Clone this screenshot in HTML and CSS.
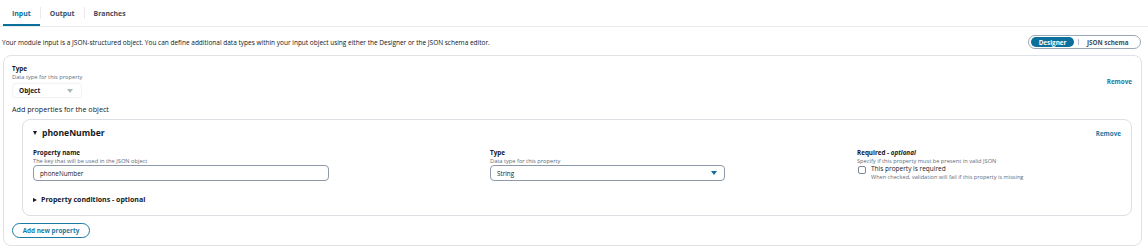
FILE: index.html
```html
<!DOCTYPE html>
<html lang="en">
<head>
    <meta charset="UTF-8">
    <title>Module input</title>
    <link rel="stylesheet" href="styles.css">
</head>
<body>
    <div class="tabs">
        <div class="tab active">Input</div>
        <div class="tab-sep"></div>
        <div class="tab">Output</div>
        <div class="tab-sep"></div>
        <div class="tab">Branches</div>
    </div>

    <div class="intro">
        <p class="intro-text">Your module input is a JSON-structured object. You can define additional data types within your input object using either the Designer or the JSON schema editor.</p>
        <div class="segmented">
            <button class="seg active">Designer</button>
            <span class="seg-sep"></span>
            <button class="seg">JSON schema</button>
        </div>
    </div>

    <div class="panel">
        <div class="panel-head">
            <div class="field">
                <div class="label">Type</div>
                <div class="hint">Data type for this property</div>
                <div class="select select-plain">
                    <span>Object</span>
                    <span class="caret grey"></span>
                </div>
            </div>
            <a class="link">Remove</a>
        </div>

        <div class="sub-title">Add properties for the object</div>

        <div class="prop">
            <div class="prop-head">
                <div class="prop-name"><span class="arrow-down"></span>phoneNumber</div>
                <a class="link">Remove</a>
            </div>
            <div class="prop-grid">
                <div class="field">
                    <div class="label">Property name</div>
                    <div class="hint">The key that will be used in the JSON object</div>
                    <div class="input name-input">phoneNumber</div>
                </div>
                <div class="field">
                    <div class="label">Type</div>
                    <div class="hint">Data type for this property</div>
                    <div class="input type-input">
                        <span>String</span>
                        <span class="caret"></span>
                    </div>
                </div>
                <div class="field">
                    <div class="label">Required - <i>optional</i></div>
                    <div class="hint">Specify if this property must be present in valid JSON</div>
                    <label class="check">
                        <span class="box"></span>
                        <span>
                            <span class="check-label">This property is required</span>
                            <span class="check-hint">When checked, validation will fail if this property is missing</span>
                        </span>
                    </label>
                </div>
            </div>
            <div class="conditions"><span class="arrow-right"></span>Property conditions - optional</div>
        </div>

        <button class="add-btn">Add new property</button>
    </div>
</body>
</html>
```

FILE: styles.css
```css
body {
    margin: 0;
    font-family: "Open Sans", "Noto Sans", sans-serif;
    color: #16191f;
    background: #ffffff;
}

.tabs {
    display: flex;
    align-items: center;
    height: 26px;
    padding-left: 3px;
    border-bottom: 1px solid #e9ebed;
}

.tab {
    height: 26px;
    box-sizing: border-box;
    padding: 9px 9px 0;
    font-size: 6.9px;
    font-weight: 700;
    color: #414d5c;
}

.tab.active {
    color: #0a6f9a;
    border-bottom: 2px solid #0a6f9a;
}

.tab-sep {
    width: 1px;
    height: 12px;
    background: #e9ebed;
}

.intro {
    display: flex;
    align-items: center;
    justify-content: space-between;
    padding: 8px 7px 0 2px;
}

.intro-text {
    margin: 0;
    font-size: 6.5px;
    color: #0f141a;
}

.segmented {
    display: flex;
    align-items: center;
    width: 113px;
    height: 14px;
    box-sizing: border-box;
    padding: 1px 2px;
    border: 1px solid #9ba7b6;
    border-radius: 8px;
}

.seg {
    border: 0;
    background: none;
    font-family: inherit;
    font-size: 6.3px;
    font-weight: 700;
    color: #414d5c;
    padding: 0 8px;
    height: 10px;
    border-radius: 6px;
}

.seg.active {
    background: #0a6f9a;
    color: #ffffff;
    width: 43px;
    padding: 0;
}

.seg-sep {
    width: 1px;
    height: 6px;
    margin-left: 4px;
    background: #b6bec9;
}

.panel {
    margin: 6px 6px 0 3px;
    padding: 9px 9px 9px 8px;
    border: 1px solid #e0e2e5;
    border-radius: 8px;
    height: 171px;
}

.panel-head {
    display: flex;
    align-items: center;
    justify-content: space-between;
}

.label {
    font-size: 6.3px;
    font-weight: 700;
    line-height: 8px;
}

.label i {
    font-weight: 700;
}

.hint {
    font-size: 5.7px;
    color: #5f6b7a;
    line-height: 8px;
}

.link {
    font-size: 6.3px;
    font-weight: 700;
    color: #1a7aa3;
}

.select {
    display: flex;
    align-items: center;
    justify-content: space-between;
    box-sizing: border-box;
    margin-top: 2px;
    height: 15px;
    font-size: 6.5px;
    font-weight: 700;
}

.select-plain {
    width: 70px;
    padding: 0 8px 0 6px;
    border: 1px solid #f2f3f3;
    border-radius: 4px;
    box-shadow: 0 0 1px rgba(0, 0, 0, 0.08);
}

.caret {
    width: 0;
    height: 0;
    border-left: 3px solid transparent;
    border-right: 3px solid transparent;
    border-top: 4px solid #0a6f9a;
}

.caret.grey {
    border-top-color: #aab7b8;
}

.sub-title {
    margin-top: 6px;
    font-size: 7.2px;
    color: #16191f;
}

.prop {
    margin: 5px 0 0 10px;
    padding: 7px 10px 8px 10px;
    border: 1px solid #dcdfe3;
    border-radius: 8px;
    height: 80px;
}

.prop-head {
    display: flex;
    align-items: center;
    justify-content: space-between;
}

.prop-name {
    display: flex;
    align-items: center;
    font-size: 8.6px;
    font-weight: 700;
}

.arrow-down {
    width: 0;
    height: 0;
    margin-right: 5px;
    border-left: 2.5px solid transparent;
    border-right: 2.5px solid transparent;
    border-top: 4px solid #16191f;
}

.arrow-right {
    width: 0;
    height: 0;
    margin-right: 4px;
    border-top: 2.5px solid transparent;
    border-bottom: 2.5px solid transparent;
    border-left: 4px solid #16191f;
}

.prop-grid {
    display: grid;
    grid-template-columns: 457px 367px 1fr;
    margin-top: 10px;
}

.input {
    box-sizing: border-box;
    height: 16px;
    margin-top: 0;
    padding: 0 6px;
    border: 1px solid #8d99a8;
    border-radius: 4px;
    font-size: 6.3px;
    display: flex;
    align-items: center;
}

.name-input {
    width: 296px;
}

.type-input {
    width: 235px;
    justify-content: space-between;
    padding-right: 7px;
}

.check {
    display: flex;
    align-items: flex-start;
    margin-top: 0;
}

.box {
    width: 6px;
    height: 6px;
    margin: 1px 5px 0 1px;
    border: 1px solid #7d8998;
    border-radius: 2px;
}

.check-label {
    display: block;
    font-size: 6.5px;
    line-height: 8px;
}

.check-hint {
    display: block;
    font-size: 5.6px;
    color: #5f6b7a;
    line-height: 8px;
}

.conditions {
    display: flex;
    align-items: center;
    margin-top: 14px;
    font-size: 7px;
    font-weight: 700;
}

.add-btn {
    margin-top: 5px;
    width: 78px;
    height: 15px;
    border: 1.3px solid #1a7aa3;
    border-radius: 8px;
    background: #ffffff;
    font-family: inherit;
    font-size: 6.3px;
    font-weight: 700;
    color: #1a7aa3;
    padding: 0;
}
```
